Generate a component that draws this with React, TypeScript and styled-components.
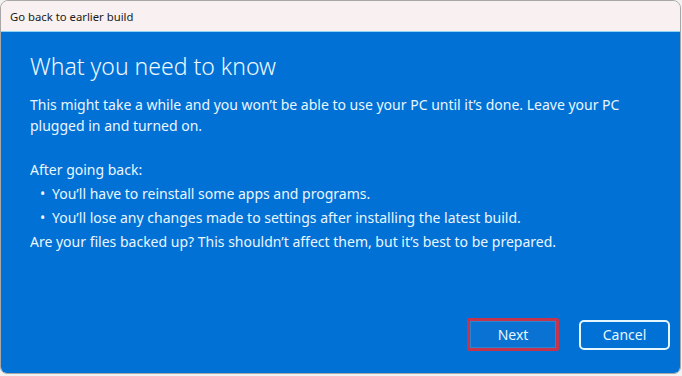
import React from "react";
import styled, { createGlobalStyle } from "styled-components";

const Global = createGlobalStyle`
  html, body { margin: 0; padding: 0; background: #f2f2f2; }
  #root { width: 682px; height: 376px; }
`;

const Window = styled.div`
  box-sizing: border-box;
  width: 681px;
  height: 374px;
  border: 1px solid #a9a6a6;
  border-radius: 8px 8px 7px 7px;
  overflow: hidden;
  display: flex;
  flex-direction: column;
  font-family: "Noto Sans", "Open Sans", sans-serif;
`;

const TitleBar = styled.div`
  height: 30px;
  flex: none;
  background: #f9f1f1;
  border-bottom: 1px solid #8fd3f2;
  display: flex;
  align-items: center;
  padding-left: 9px;
  font-size: 11.3px;
  color: #1a1a1a;
`;

const Body = styled.div`
  flex: 1;
  background: #0171d5;
  color: #eaf6ff;
  display: flex;
  flex-direction: column;
`;

const Content = styled.div`
  padding: 18px 29px 0 29px;
`;

const Heading = styled.h1`
  margin: 0 0 12px 0;
  font-size: 23px;
  font-weight: 300;
  line-height: 32px;
  color: #eef8ff;
`;

const Para = styled.p<{ $gap?: number }>`
  margin: 0 0 ${(p) => p.$gap ?? 0}px 0;
  font-size: 14px;
  line-height: ${(p) => (p.$gap !== undefined ? 21 : 24)}px;
`;

const List = styled.ul`
  margin: 0;
  padding: 0 0 0 22px;
  list-style: none;
`;

const Item = styled.li`
  font-size: 14px;
  line-height: 24px;
  position: relative;
  &::before {
    content: "•";
    position: absolute;
    left: -12px;
  }
`;

const Footer = styled.div`
  margin-top: auto;
  display: flex;
  justify-content: flex-end;
  gap: 20px;
  padding: 0 10px 22px 0;
`;

const Button = styled.button<{ $highlight?: boolean }>`
  box-sizing: border-box;
  width: ${(p) => (p.$highlight ? 92 : 91)}px;
  height: ${(p) => (p.$highlight ? 33 : 30)}px;
  font-family: inherit;
  font-size: 14px;
  color: #e6f6ff;
  background: ${(p) => (p.$highlight ? "#0a72d2" : "transparent")};
  border: ${(p) => (p.$highlight ? "3px solid #c4344c" : "2px solid #e6f6ff")};
  border-radius: ${(p) => (p.$highlight ? 2 : 5)}px;
  box-shadow: ${(p) => (p.$highlight ? "inset 0 0 0 1px #2f83cf" : "none")};
  display: flex;
  align-items: center;
  justify-content: center;
  padding: 0;
  align-self: center;
`;

export default function App() {
  return (
    <>
      <Global />
      <Window>
        <TitleBar>Go back to earlier build</TitleBar>
        <Body>
          <Content>
            <Heading>What you need to know</Heading>
            <Para $gap={22}>
              This might take a while and you won’t be able to use your PC until it’s done. Leave your PC plugged in and turned on.
            </Para>
            <Para>After going back:</Para>
            <List>
              <Item>You’ll have to reinstall some apps and programs.</Item>
              <Item>You’ll lose any changes made to settings after installing the latest build.</Item>
            </List>
            <Para>Are your files backed up? This shouldn’t affect them, but it’s best to be prepared.</Para>
          </Content>
          <Footer>
            <Button $highlight>Next</Button>
            <Button>Cancel</Button>
          </Footer>
        </Body>
      </Window>
    </>
  );
}
